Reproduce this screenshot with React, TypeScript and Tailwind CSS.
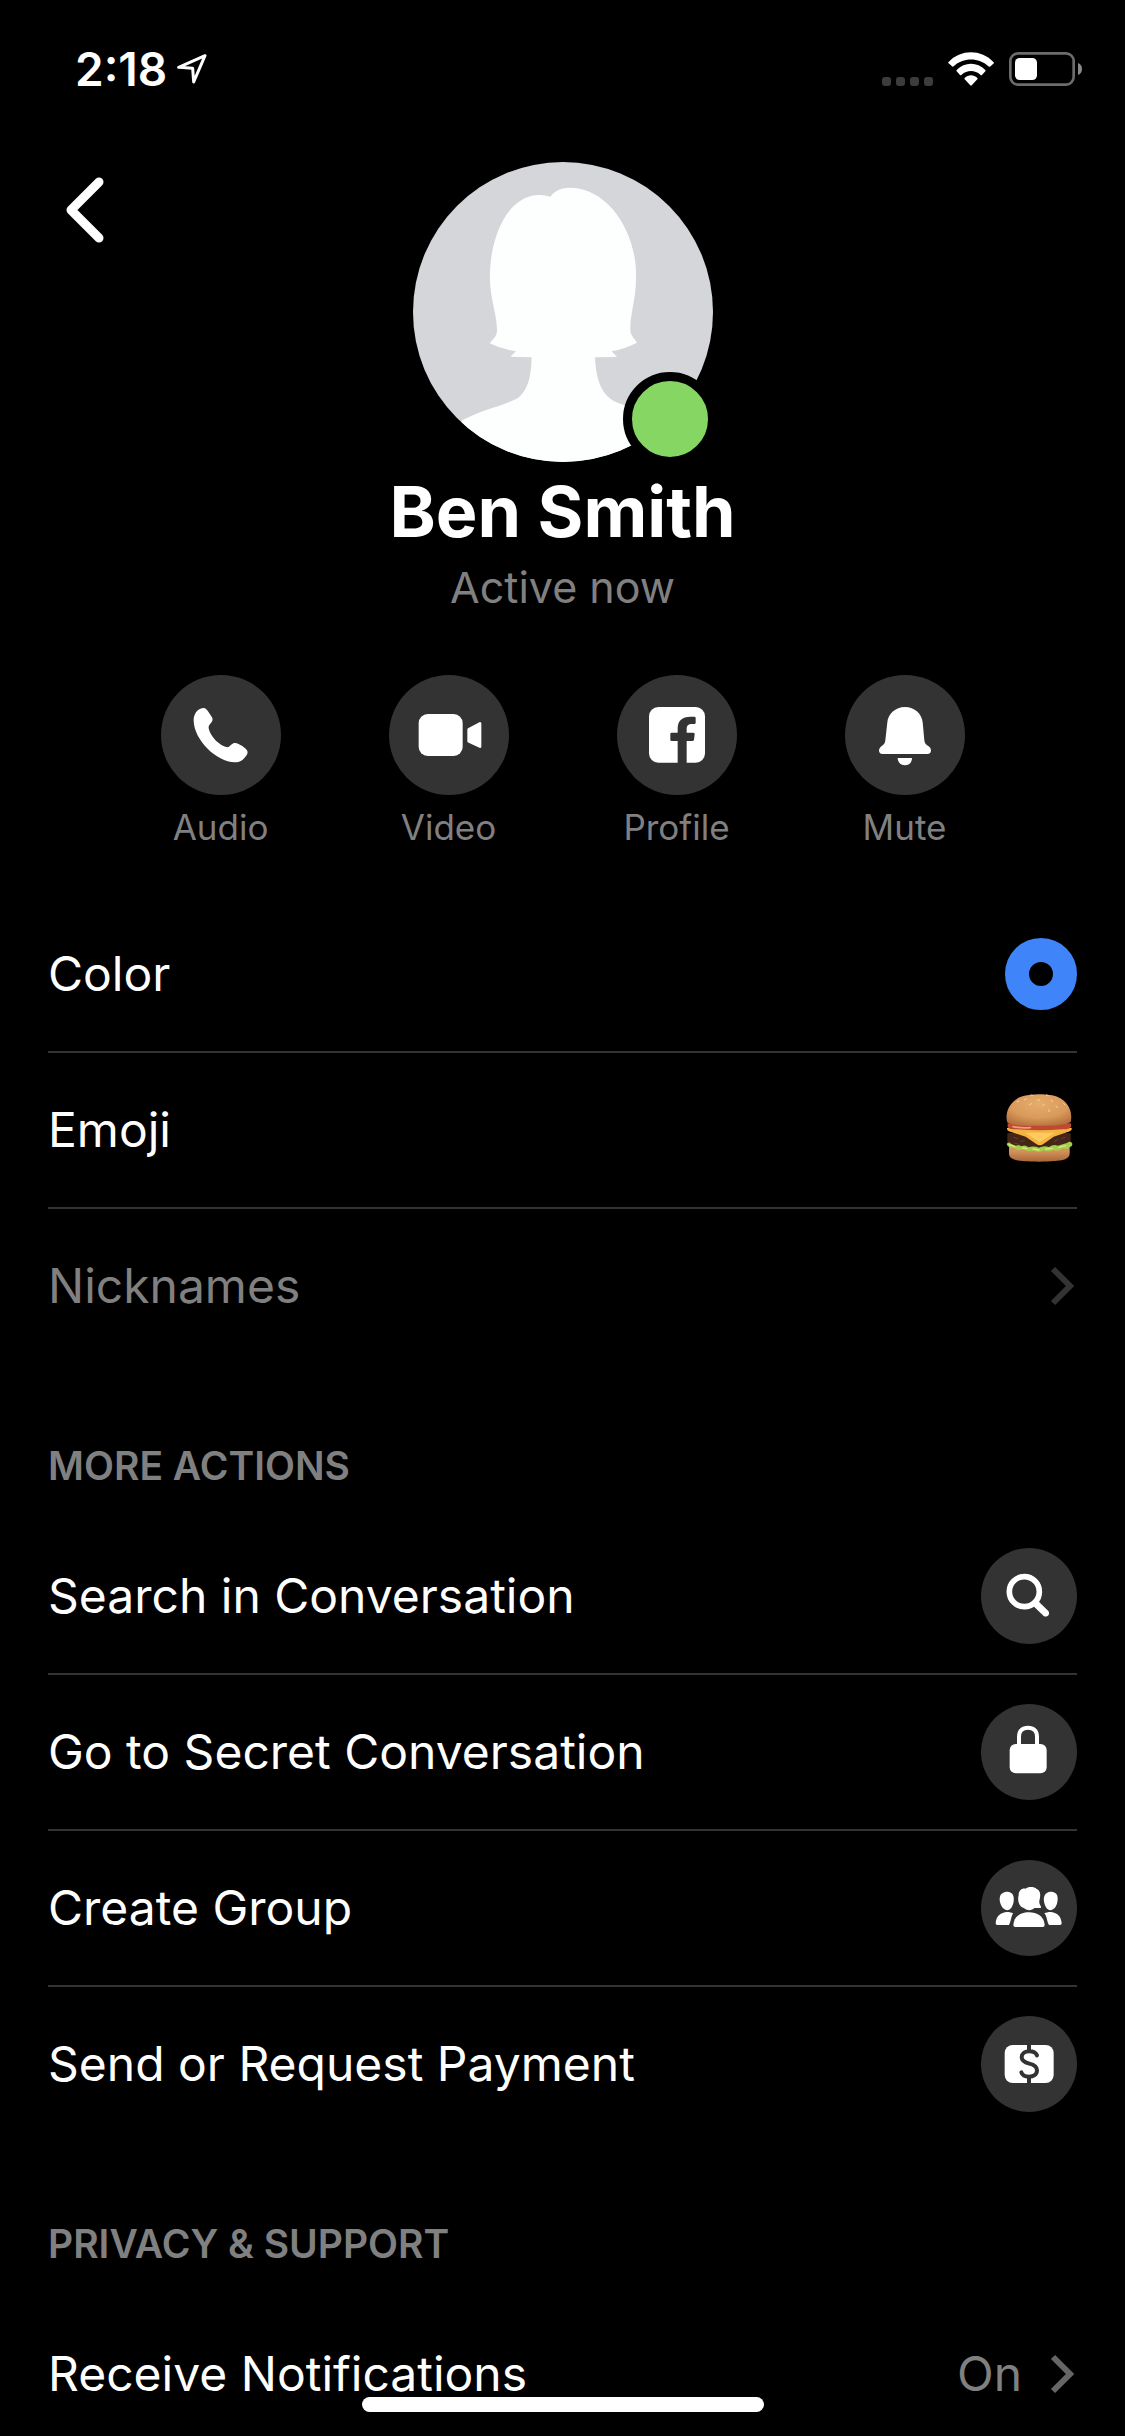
import type { ReactNode } from 'react';

function BackIcon() {
  return (
    <svg viewBox="0 0 38 66" className="h-[66px] w-[38px]" fill="none" stroke="currentColor" strokeWidth="9" strokeLinecap="round" strokeLinejoin="round">
      <path d="M33 5 L5 33 L33 61" />
    </svg>
  );
}

function ChevronIcon() {
  return (
    <svg viewBox="0 0 27 40" className="h-10 w-[27px]" fill="none" stroke="currentColor" strokeWidth="6">
      <path d="M3 3 L20 20 L3 37" />
    </svg>
  );
}

function PhoneIcon() {
  return (
    <svg viewBox="0 0 360 360" className="size-full" fill="currentColor">
      <path d="M127 99C132 98 137 103 141 109L151 124C157 133 155 139 150 144C145 149 142 153 143 160C148 185 175 213 200 217C206 216 211 206 220 204C228 203 235 208 244 213L254 221C262 228 261 235 255 243C246 256 236 262 222 262C165 260 100 195 98 138C97 120 107 101 127 99Z" />
    </svg>
  );
}

function VideoIcon() {
  return (
    <svg viewBox="0 0 360 360" className="size-full" fill="currentColor">
      <rect x="89" y="117" width="132" height="126" rx="27" />
      <path d="M239 163L273 145V215L239 199Z" stroke="currentColor" strokeWidth="8" strokeLinejoin="round" />
    </svg>
  );
}

function ProfileIcon() {
  return (
    <svg viewBox="0 0 360 360" className="size-full">
      <rect x="96" y="96" width="168" height="167" rx="28" fill="currentColor" />
      <path d="M182 265V198H164Q160 198 160 194V177Q160 173 164 173H182V160C182 137 196 125 220 125H232Q236 125 236 129V143Q236 147 232 147H226C213 147 209 152 209 162V173H229Q234 173 233 178L231 194Q230 198 226 198H209V265Z" fill="#333333" />
    </svg>
  );
}

function BellIcon() {
  return (
    <svg viewBox="0 0 360 360" className="size-full" fill="currentColor">
      <path d="M180 96C209 96 231 117 233 142L238 196C239 206 244 210 251 214C256 218 258 222 258 227C258 233 253 237 247 237H113C107 237 102 233 102 227C102 222 105 218 109 214C117 209 120 205 121 196L127 142C129 117 151 96 180 96Z" />
      <path d="M158 249H201C201 262 192 271 180 271S158 262 158 249Z" />
    </svg>
  );
}

function SearchIcon() {
  return (
    <svg viewBox="0 0 288 288" className="size-full" fill="none" stroke="currentColor">
      <circle cx="130" cy="131" r="45" strokeWidth="17" />
      <path d="M157 174L172 160L202 189C209 198 199 210 188 204Z" fill="currentColor" stroke="none" />
    </svg>
  );
}

function LockIcon() {
  return (
    <svg viewBox="0 0 288 288" className="size-full">
      <rect x="86" y="120" width="111" height="88" rx="18" fill="currentColor" />
      <path d="M114 124V98C114 80 125 71 141 71S168 80 168 98V124" fill="none" stroke="currentColor" strokeWidth="12" />
    </svg>
  );
}

function GroupIcon() {
  return (
    <svg viewBox="0 0 288 288" className="size-full" fill="currentColor">
      <path d="M134 86C140 80 159 79 167 87C177 91 180 103 176 118C174 126 174 131 180 140C181 143 179 144 176 144H160C153 152 137 153 129 144C116 142 108 124 113 105C113 92 122 84 134 86Z" />
      <path d="M97 195C99 168 120 157 144 157C168 157 189 168 191 195Q191 201 185 201H103Q97 201 97 195Z" />
      <path d="M67 98C73 94 84 95 89 98C96 101 100 110 98 124C96 140 88 150 79 151C70 150 60 141 57 126C54 113 58 100 67 98Z" />
      <path d="M221 98C215 94 204 95 199 98C192 101 187 110 189 124C191 140 199 150 208 151C217 150 227 141 229 126C232 113 229 100 221 98Z" />
      <path d="M44 190C45 168 60 157 78 156C86 156 92 158 96 160C90 170 90 184 84 195H49Q44 195 44 190Z" />
      <path d="M242 190C241 168 226 157 209 156C201 156 195 158 190 160C199 170 197 184 204 195H237Q242 195 242 190Z" />
    </svg>
  );
}

function PaymentIcon() {
  return (
    <svg viewBox="0 0 288 288" className="size-full">
      <rect x="71" y="87" width="147" height="114" rx="24" fill="currentColor" />
      <path d="M168 118C164 109 155 106 145 106C132 106 122 113 122 124C122 136 133 140 145 143C158 146 168 150 168 163C168 176 157 182 144 182C132 182 124 178 121 169M144 84V104M144 184V204" fill="none" stroke="#333333" strokeWidth="12" strokeLinecap="round" />
    </svg>
  );
}

function BurgerEmoji() {
  return (
    <svg viewBox="0 0 216 216" className="size-[72px]" role="img" aria-label="Hamburger">
      <defs>
        <radialGradient id="bun" cx="0.5" cy="0.3" r="0.75">
          <stop offset="0" stopColor="#e6ad6c" />
          <stop offset="0.6" stopColor="#d99a5a" />
          <stop offset="1" stopColor="#b56f3c" />
        </radialGradient>
        <linearGradient id="base" x1="0" y1="0" x2="0" y2="1">
          <stop offset="0.4" stopColor="#d4935a" />
          <stop offset="1" stopColor="#a9663a" />
        </linearGradient>
      </defs>
      <path d="M12 150H194V178C194 196 176 203 102 203S12 196 12 178Z" fill="url(#base)" />
      <path d="M7 118Q100 112 197 118V146Q194 160 180 158Q100 172 22 158Q8 158 7 146Z" fill="#43251a" />
      <path d="M26 130L38 134M46 142L58 140M148 142L160 136M168 134L180 130M30 148L42 151" stroke="#6b402c" strokeWidth="3" strokeLinecap="round" />
      <path d="M5 150Q10 141 18 149L32 155Q42 151 50 157Q60 151 70 160Q86 154 102 161Q118 153 132 159Q146 150 158 155L186 147Q198 138 202 149Q203 158 194 160Q187 169 174 163Q160 174 144 167Q130 175 116 169Q102 178 86 169Q70 175 56 166Q38 172 28 162Q8 162 5 150Z" fill="#a3d04a" />
      <path d="M12 152L30 158M52 162L66 164M84 165L102 168M122 165L142 163M162 160L182 155" stroke="#cdee78" strokeWidth="4" strokeLinecap="round" />
      <path d="M6 102H200Q202 110 190 113L146 128L114 151Q104 157 94 150L62 128L12 112Q5 109 6 102Z" fill="#f4b440" />
      <path d="M60 116L150 116L104 144Z" fill="#ffcb60" />
      <path d="M8 88H198V99Q192 107 172 106Q104 112 36 106Q12 107 8 99Z" fill="#bf4a32" />
      <path d="M24 98Q50 103 76 101" stroke="#f09a80" strokeWidth="5" strokeLinecap="round" fill="none" />
      <path d="M6 82C0 54 14 23 46 9C74 -2 134 -2 158 9C190 22 204 54 197 84C182 94 150 95 102 95S20 95 6 84Z" fill="url(#bun)" />
      <path d="M78 3L84 5M124 3L130 5M58 17L64 15M98 19L104 17M138 19L143 23M36 23L42 21M74 32L80 29M113 35L118 32M154 36L158 41M176 29L180 33M132 47V53" stroke="#f7d49c" strokeWidth="3" strokeLinecap="round" />
    </svg>
  );
}

function StatusBar() {
  return (
    <div className="flex h-[138px] shrink-0 items-center justify-between pr-[43px] pl-[75px]">
      <div className="flex items-center gap-[10px]">
        <span className="text-[46px] leading-[56px] font-semibold">2:18</span>
        <svg viewBox="0 0 90 90" className="size-[30px]" fill="none" stroke="currentColor" strokeWidth="9" strokeLinejoin="round">
          <path d="M84 5L5 40L47 43L50 84Z" />
        </svg>
      </div>
      <div className="flex items-center gap-[15px]">
        <div className="flex gap-[5px] pt-6">
          {[0, 1, 2, 3].map((dot) => (
            <span key={dot} className="size-[9px] rounded-[3px] bg-[#3c3c3c]" />
          ))}
        </div>
        <svg viewBox="0 0 138 100" className="h-[34px] w-[46px]" fill="currentColor">
          <path d="M1 30C38 -10 100 -10 137 30Q139 32 136 34L126 43Q124 44 121 42C93 15 45 15 17 42Q14 44 12 42L2 33Q-1 31 1 30Z" />
          <path d="M26 53C50 28 88 28 112 53Q114 55 112 57L102 68Q100 70 97 67C81 52 57 52 41 67Q38 70 36 68L26 57Q24 55 26 53Z" />
          <path d="M50 77C61 66 77 66 88 77Q90 79 88 81L72 98Q69 101 66 98L50 81Q48 79 50 77Z" />
        </svg>
        <svg viewBox="0 0 219 102" className="h-[34px] w-[73px]">
          <rect x="4" y="4" width="190" height="94" rx="23" fill="none" stroke="#6c6c6c" strokeWidth="8" />
          <rect x="18" y="18" width="66" height="66" rx="14" fill="currentColor" />
          <path d="M207 33Q219 38 219 51T207 69Z" fill="#8a8a8a" />
        </svg>
      </div>
    </div>
  );
}

function Avatar() {
  return (
    <div className="relative size-[300px]">
      <svg viewBox="0 0 900 900" className="size-full rounded-full bg-[#d5d6da]" fill="#fdfefe" role="img" aria-label="Ben Smith">
        <path d="M412 104C426 84 448 77 474 77C590 80 669 215 669 335C671 410 651 450 652 505C652 518 662 527 672 542Q634 561 596 568L612 585L546 586C548 640 560 690 597 714C650 742 720 748 785 790L900 900H50L149 774C210 742 260 735 314 709C350 680 354 635 356 586L292 584L309 568Q266 562 230 544C242 530 252 522 252 505C252 450 228 410 231 330C233 240 275 105 374 99Q395 98 412 104Z" />
      </svg>
      {/* Online badge */}
      <span className="absolute -right-1 -bottom-1 size-[94px] rounded-full border-[9px] border-black bg-[#86d664]" />
    </div>
  );
}

const quickActions = [
  { label: 'Audio', icon: <PhoneIcon /> },
  { label: 'Video', icon: <VideoIcon /> },
  { label: 'Profile', icon: <ProfileIcon /> },
  { label: 'Mute', icon: <BellIcon /> },
];

const moreActions = [
  { label: 'Search in Conversation', icon: <SearchIcon /> },
  { label: 'Go to Secret Conversation', icon: <LockIcon /> },
  { label: 'Create Group', icon: <GroupIcon /> },
  { label: 'Send or Request Payment', icon: <PaymentIcon /> },
];

function Row({ label, disabled, children }: { label: string; disabled?: boolean; children: ReactNode }) {
  return (
    <li className="border-b-2 border-[#333333] last:border-transparent">
      <button
        disabled={disabled}
        className="flex h-[154px] w-full items-center justify-between text-left text-[48px] leading-[64px] disabled:text-[#808080]"
      >
        <span>{label}</span>
        {children}
      </button>
    </li>
  );
}

function SectionTitle({ children }: { children: ReactNode }) {
  return (
    <h2 className="pt-[76px] pb-7 text-[39px] leading-[50px] font-semibold text-[#808080] uppercase">{children}</h2>
  );
}

export default function App() {
  return (
    <div className="relative flex h-screen flex-col overflow-hidden bg-black font-[Inter,sans-serif] text-white">
      <StatusBar />

      <main className="min-h-0 flex-1 overflow-y-auto [scrollbar-width:none]">
        {/* Profile header */}
        <header className="grid grid-cols-[1fr_auto_1fr] items-start pt-6">
          <button aria-label="Back" className="justify-self-start pt-[15px] pl-[66px]">
            <BackIcon />
          </button>
          <Avatar />
        </header>
        <h1 className="mt-2 text-center text-[70px] leading-[84px] font-bold">Ben Smith</h1>
        <p className="mt-[5px] text-center text-[43px] leading-[56px] text-[#808080]">Active now</p>

        {/* Quick actions */}
        <div className="mt-[60px] flex justify-center gap-[108px]">
          {quickActions.map((action) => (
            <button key={action.label} className="flex w-[120px] flex-col items-center gap-2">
              <span className="size-[120px] rounded-full bg-[#333333]">{action.icon}</span>
              <span className="text-[35px] leading-[48px] text-[#808080]">{action.label}</span>
            </button>
          ))}
        </div>

        <div className="px-12 pt-[46px]">
          <ul>
            <Row label="Color">
              <span className="size-[72px] rounded-full border-[24px] border-[#3f84f8]" />
            </Row>
            <Row label="Emoji">
              <BurgerEmoji />
            </Row>
            <Row label="Nicknames" disabled>
              <span className="text-[#333333]">
                <ChevronIcon />
              </span>
            </Row>
          </ul>

          <SectionTitle>More Actions</SectionTitle>
          <ul>
            {moreActions.map((action) => (
              <Row key={action.label} label={action.label}>
                <span className="size-24 rounded-full bg-[#333333]">{action.icon}</span>
              </Row>
            ))}
          </ul>

          <SectionTitle>Privacy &amp; Support</SectionTitle>
          <ul>
            <Row label="Receive Notifications">
              <span className="flex items-center gap-7 text-[#808080]">
                On
                <span className="text-[#666666]">
                  <ChevronIcon />
                </span>
              </span>
            </Row>
          </ul>
        </div>
      </main>

      {/* Home indicator */}
      <div className="absolute bottom-6 left-1/2 h-[15px] w-[402px] -translate-x-1/2 rounded-full bg-white" />
    </div>
  );
}
